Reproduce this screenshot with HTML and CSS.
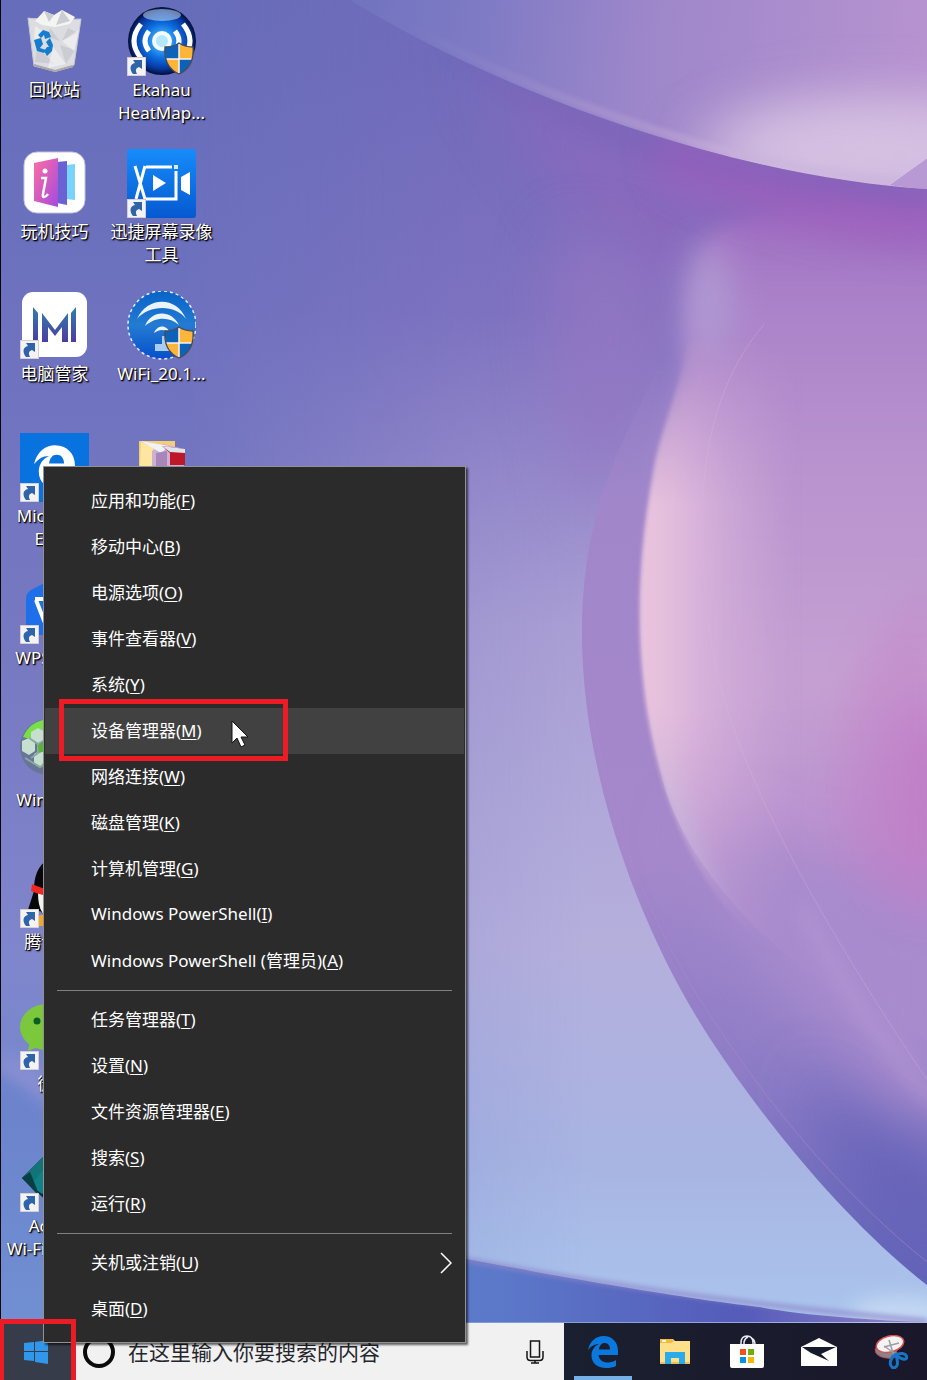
FILE: index.html
```html
<!DOCTYPE html>
<html lang="zh-CN">
<head>
<meta charset="utf-8">
<meta name="viewport" content="width=device-width, initial-scale=1">
<title>Windows 桌面</title>
<link rel="stylesheet" href="styles.css">
</head>
<body>
<svg class="defs" width="0" height="0" aria-hidden="true">
  <defs>
    <symbol id="shortcut" viewBox="0 0 19 19">
      <path d="M0 0H19V19H0Z" fill="#f4f2f2" stroke="#c9c4cc" stroke-width="1.5"/>
      <path d="M6 17C2 12 3 7 8 6L6 3H15V12L12 10C9 11 8 13 10 17Z" fill="#2f64a8"/>
    </symbol>
    <symbol id="shield" viewBox="0 0 30 33">
      <path d="M15 1C11 4 6 5 1 5C0 17 4 27 15 32C26 27 30 17 29 5C24 5 19 4 15 1Z" fill="#ffb53a"/>
      <path d="M15 1C11 4 6 5 1 5Q0.500 11 2 17H15ZM15 17H28C26 24 21 29 15 32Z" fill="#0b62b8"/>
      <path d="M15 2V31M2 17H28" stroke="#f4f4f4" stroke-width="1.500"/>
      <path d="M15 1C11 4 6 5 1 5C0 17 4 27 15 32C26 27 30 17 29 5C24 5 19 4 15 1Z" fill="none" stroke="#4a4a52" stroke-width="1.300"/>
    </symbol>
    <symbol id="edge" viewBox="0 0 30 32">
      <path d="M0 14C2 5 8 0 15.500 0C24 0 30 6 30 15V19H10.500C11 24 15 26.500 20 26.500C23.500 26.500 26 25.500 28 24V30C25 31.500 22 32 18 32C9 32 3.500 27 3.500 19.500C3.500 14 6.500 10 11 8C6 8 3 10.500 0 14ZM11 13.500H22C22 9.500 20 7 16.500 7C13.500 7 11.500 9.500 11 13.500Z"/>
    </symbol>
  </defs>
</svg>

<div class="screen">
  <main class="desktop">
    <svg class="wallpaper" viewBox="0 0 927 1323" preserveAspectRatio="none" aria-hidden="true">
      <defs>
        <linearGradient id="base" x1="0" y1="0" x2="0" y2="1">
          <stop offset="0" stop-color="#666dba"/><stop offset=".25" stop-color="#6e72bf"/><stop offset=".5" stop-color="#7779c1"/><stop offset=".72" stop-color="#8086cc"/><stop offset=".85" stop-color="#7388cd"/><stop offset="1" stop-color="#7b9ad8"/>
        </linearGradient>
        <linearGradient id="mid" gradientUnits="userSpaceOnUse" x1="0" y1="60" x2="0" y2="1323">
          <stop offset="0" stop-color="#746bbb"/><stop offset=".2" stop-color="#8072c0"/><stop offset=".32" stop-color="#9588ca"/><stop offset=".45" stop-color="#aa9fd4"/><stop offset=".7" stop-color="#b5afdc"/><stop offset=".87" stop-color="#a8b4e2"/><stop offset="1" stop-color="#aac5ed"/>
        </linearGradient>
        <linearGradient id="midFade" gradientUnits="userSpaceOnUse" x1="180" y1="0" x2="590" y2="0">
          <stop offset="0" stop-color="#fff" stop-opacity="0"/><stop offset=".72" stop-color="#fff" stop-opacity=".85"/><stop offset="1" stop-color="#fff"/>
        </linearGradient>
        <mask id="midMask"><rect width="927" height="1323" fill="url(#midFade)"/></mask>
        <linearGradient id="sky" gradientUnits="userSpaceOnUse" x1="300" y1="0" x2="927" y2="60">
          <stop offset="0" stop-color="#6b70bd"/><stop offset=".3" stop-color="#807bc5"/><stop offset=".55" stop-color="#9d87ca"/><stop offset="1" stop-color="#b793d0"/>
        </linearGradient>
        <linearGradient id="petal" gradientUnits="userSpaceOnUse" x1="0" y1="180" x2="0" y2="1290">
          <stop offset="0" stop-color="#9a66be"/><stop offset=".11" stop-color="#aa82c9"/><stop offset=".25" stop-color="#b792ce"/><stop offset=".45" stop-color="#c5a0d2"/><stop offset=".62" stop-color="#b78fce"/><stop offset=".75" stop-color="#a387cb"/><stop offset=".88" stop-color="#8775c3"/><stop offset="1" stop-color="#6265ba"/>
        </linearGradient>
        <linearGradient id="band" gradientUnits="userSpaceOnUse" x1="0" y1="350" x2="0" y2="1280">
          <stop offset="0" stop-color="#9b80c7" stop-opacity="0"/><stop offset=".18" stop-color="#a286ca"/><stop offset=".55" stop-color="#a488cb"/><stop offset=".8" stop-color="#8b7bc6"/><stop offset="1" stop-color="#6065b9"/>
        </linearGradient>
        <linearGradient id="pink" gradientUnits="userSpaceOnUse" x1="640" y1="0" x2="800" y2="0">
          <stop offset="0" stop-color="#eac4de"/><stop offset=".18" stop-color="#e3bedc"/><stop offset=".35" stop-color="#d8b3da"/><stop offset="1" stop-color="#cba8d7" stop-opacity="0"/>
        </linearGradient>
        <linearGradient id="pinkFade" gradientUnits="userSpaceOnUse" x1="0" y1="330" x2="0" y2="960">
          <stop offset="0" stop-color="#fff" stop-opacity="0"/><stop offset=".28" stop-color="#fff"/><stop offset=".6" stop-color="#fff"/><stop offset="1" stop-color="#fff" stop-opacity="0"/>
        </linearGradient>
        <mask id="pinkMask"><rect width="927" height="1323" fill="url(#pinkFade)"/></mask>
        <linearGradient id="rim" gradientUnits="userSpaceOnUse" x1="400" y1="0" x2="700" y2="0">
          <stop offset="0" stop-color="#c1a8d8" stop-opacity="0"/><stop offset="1" stop-color="#c9b2dc"/>
        </linearGradient>
        <linearGradient id="foot" gradientUnits="userSpaceOnUse" x1="0" y1="0" x2="927" y2="0">
          <stop offset="0" stop-color="#7394d8"/><stop offset=".55" stop-color="#5b77c8"/><stop offset=".8" stop-color="#555bb9"/><stop offset="1" stop-color="#9382c8"/>
        </linearGradient>
        <filter id="b2" filterUnits="userSpaceOnUse" x="-100" y="-100" width="1150" height="1550"><feGaussianBlur stdDeviation="2"/></filter>
        <filter id="b8" filterUnits="userSpaceOnUse" x="-100" y="-100" width="1150" height="1550"><feGaussianBlur stdDeviation="9"/></filter>
        <filter id="b18" filterUnits="userSpaceOnUse" x="-100" y="-100" width="1150" height="1550"><feGaussianBlur stdDeviation="18"/></filter>
        <filter id="b30" filterUnits="userSpaceOnUse" x="-100" y="-100" width="1150" height="1550"><feGaussianBlur stdDeviation="30"/></filter>
        <clipPath id="skyClip"><path d="M350 0C440 55 560 110 700 149C780 171 860 185 927 189V0Z"/></clipPath>
        <clipPath id="lowClip"><path d="M0 0H350C440 55 560 110 700 149C780 171 860 185 927 189V1323H0Z"/></clipPath>
        <clipPath id="petalClip"><path d="M690 150C700 330 580 440 582 640C584 780 640 930 709 1037C770 1130 850 1225 927 1285V150Z"/></clipPath>
      </defs>
      <rect width="927" height="1323" fill="url(#base)"/>
      <g clip-path="url(#lowClip)">
        <rect width="927" height="1323" fill="url(#mid)" mask="url(#midMask)"/>
        <path d="M470 60C560 110 740 170 950 185V270C840 260 720 230 680 330C640 300 560 200 470 60Z" fill="#9267bd" opacity=".6" filter="url(#b30)"/>
        <path d="M560 230C640 240 680 300 672 350C665 400 620 450 590 520C560 440 540 330 560 230Z" fill="#9477c3" opacity=".75" filter="url(#b30)"/>
      </g>
      <path d="M350 0C440 55 560 110 700 149C780 171 860 185 927 189V0Z" fill="url(#sky)"/>
      <g clip-path="url(#skyClip)">
        <ellipse cx="870" cy="150" rx="150" ry="45" fill="#d8c4e3" filter="url(#b30)"/>
        <ellipse cx="860" cy="155" rx="170" ry="38" fill="#d5c2e2" opacity=".7" filter="url(#b30)"/>
        <path d="M400 20C480 66 570 105 700 144C780 166 860 180 927 184" fill="none" stroke="url(#rim)" stroke-width="9" opacity=".4" filter="url(#b2)"/>
        <path d="M889 185L927 158V190Z" fill="#b899d3"/>
        <path d="M889 185L927 158" stroke="#d6c1e3" fill="none"/>
      </g>
      <g clip-path="url(#lowClip)">
        <path d="M715 230C780 200 860 205 960 210V1190C850 1120 730 960 690 800C650 650 640 520 675 400C695 350 670 290 715 230Z" fill="url(#petal)" filter="url(#b8)"/>
        <path d="M660 120C760 165 850 182 970 188V245C850 255 770 215 660 180Z" fill="#9d60bd" opacity=".8" filter="url(#b18)"/>
        <path d="M440 42C530 94 610 126 700 152L927 190V210L700 172C610 145 530 110 440 42Z" fill="#7a5db5" opacity=".35" filter="url(#b8)"/>
      </g>
      <path d="M667 350C630 430 580 500 582 640C584 780 640 930 709 1037C770 1130 850 1225 927 1285V1040C850 1010 710 920 666 792C640 700 630 590 653 473C660 430 680 390 686 350Z" fill="url(#band)"/>
      <g clip-path="url(#petalClip)">
        <path d="M690 820C760 1000 850 1080 960 1140V900Z" fill="#a78bcd" filter="url(#b30)"/>
        <path d="M800 1060C860 1120 900 1140 960 1160V1300C890 1260 830 1180 800 1060Z" fill="#6460b7" opacity=".8" filter="url(#b30)"/>
      </g>
      <g mask="url(#pinkMask)">
        <path d="M688 340C680 390 660 430 653 473C632 590 636 700 666 792C690 870 740 940 810 990V340Z" fill="url(#pink)" filter="url(#b2)"/>
      </g>
      <ellipse cx="708" cy="300" rx="22" ry="60" fill="#b1a1d5" opacity=".8" filter="url(#b18)"/>
      <ellipse cx="930" cy="790" rx="40" ry="100" fill="#c176c4" opacity=".8" filter="url(#b30)"/>
      <path d="M940 575C870 625 840 690 835 790C835 850 860 900 940 930Z" fill="#c47fc7" opacity=".35" filter="url(#b18)"/>
      <path d="M765 323C700 400 695 500 708 620C720 740 800 890 927 1080" fill="none" stroke="#dab9df" opacity=".3" stroke-width="1"/>
      <path d="M800 905C840 980 880 1050 940 1105" fill="none" stroke="#b79bd4" opacity=".6" stroke-width="12" filter="url(#b8)"/>
      <path d="M590 690C600 800 650 930 720 1030C780 1120 850 1200 927 1262" fill="none" stroke="#b08acb" opacity=".5" stroke-width="1"/>
      <ellipse cx="900" cy="1312" rx="50" ry="16" fill="#c9dcf4" opacity=".8" filter="url(#b8)"/>
      <path d="M0 1075C20 1082 50 1105 90 1150V1400H-60V1075Z" fill="#6380cc" opacity=".4" filter="url(#b2)"/>
      <path d="M0 1060C20 1070 50 1090 90 1130" fill="none" stroke="#a39bda" opacity=".5" stroke-width="16" filter="url(#b8)"/>
      <path d="M60 1160C200 1185 300 1225 440 1254C600 1285 720 1303 760 1307C800 1315 880 1321 927 1322L60 1323Z" fill="url(#foot)"/>
      <path d="M440 1255C600 1284 720 1302 927 1321" fill="none" stroke="#8e86c9" stroke-width="6" opacity=".6" filter="url(#b2)"/>
      <rect width="1" height="1323" fill="#08080c"/>
    </svg>

    <div class="icons">
      <button class="icon" type="button">
        <svg class="icon-art" viewBox="0 0 69 69" aria-hidden="true">
          <path d="M8 11L61 12L53 60L35 65L14 59Z" fill="#d6d8df"/>
          <path d="M8 11L23 13L38 13L61 12L54 58L36 64L14 59Z" fill="#dcdde1" stroke="#c2c6d4"/>
          <path d="M15 14L24 4L34 8L42 3L55 10L50 17L35 20L22 18Z" fill="#f4f4f2"/>
          <path d="M24 4L29 15L34 8ZM42 3L36 18L50 14ZM48 21L59 26L42 34ZM40 38L55 43L46 57ZM17 40L35 57L15 55ZM30 21L40 34L28 30Z" fill="#cbcdd3"/>
          <path d="M42 34L59 23L54 44ZM33 40L46 57L28 61ZM15 19L27 27L14 33Z" fill="#f7f7f7" opacity=".6"/>
          <g fill="#167dce"><path d="M18 28L23 23L29 25L31 30L25 32L24 28L21 31Z"/><path d="M14 33L21 31L23 37L20 41L26 43L24 46L17 44Z"/><path d="M30 31L33 38L32 44L27 49L24 44L27 40H29L26 35Z"/></g>
          <path d="M14 58L35 64L53 59" fill="none" stroke="#a9a6a5" stroke-width="2"/>
        </svg>
        <span>回收站</span>
      </button>
      <button class="icon" type="button">
        <svg class="icon-art" viewBox="0 0 69 69" aria-hidden="true">
          <rect x="4" y="3" width="61" height="61" rx="13" fill="#fff" stroke="#c4c0df"/>
          <defs><linearGradient id="pk" x1="0" y1="0" x2="1" y2="1"><stop offset="0" stop-color="#ff6da2"/><stop offset="1" stop-color="#a44be0"/></linearGradient></defs>
          <path d="M46 16L55 15V51L46 50Z" fill="#78d4fb"/><path d="M37 13L47 12V56L37 54Z" fill="#6a62d2"/>
          <path d="M14 14L38 9V58L14 52Z" fill="url(#pk)"/>
          <circle cx="25" cy="22" r="2.500" fill="#fff"/><path d="M21 29H26L23 45C22 49 25 49 28 45" fill="none" stroke="#fff" stroke-width="2.500"/>
        </svg>
        <span>玩机技巧</span>
      </button>
      <button class="icon" type="button">
        <svg class="icon-art" viewBox="0 0 69 69" aria-hidden="true">
          <defs><linearGradient id="mg" x1="0" y1="0" x2="0" y2="1"><stop offset="0" stop-color="#2f7fae"/><stop offset="1" stop-color="#4c3c9f"/></linearGradient></defs>
          <rect x="2" y="1" width="65" height="65" rx="11" fill="#fff"/>
          <path d="M13 16L18 22V50H13ZM22 51V22L35 39L48 22V51H42V36L35 45L28 36V51ZM51 22L56 16V51H51Z" fill="url(#mg)"/>
          <use href="#shortcut" x="0" y="49" width="19" height="19"/>
        </svg>
        <span>电脑管家</span>
      </button>
      <button class="icon" type="button">
        <svg class="icon-art" viewBox="0 0 69 69" aria-hidden="true">
          <path d="M0 0H69V69H0Z" fill="#0873df"/>
          <use href="#edge" x="14" y="12" width="41" height="44" fill="#fff"/>
          <use href="#shortcut" x="0" y="50" width="19" height="19"/>
        </svg>
        <span>Microsoft Edge</span>
      </button>
      <button class="icon" type="button">
        <svg class="icon-art" viewBox="0 0 69 69" aria-hidden="true">
          <path d="M6 24Q6 18 11 15L34 3L63 20V60H12Q6 60 6 54Z" fill="#1e70ea"/>
          <path d="M15 24H25L32 44L40 24H50" fill="none" stroke="#fff" stroke-width="4"/><path d="M16 25L25 48L33 27" fill="none" stroke="#fff" stroke-width="4"/>
          <use href="#shortcut" x="0" y="50" width="19" height="19"/>
        </svg>
        <span>WPS 2019</span>
      </button>
      <button class="icon" type="button">
        <svg class="icon-art" viewBox="0 0 69 69" aria-hidden="true">
          <circle cx="28" cy="30" r="28" fill="#687498"/>
          <path d="M3 20Q10 4 28 2V20L19 15L10 22Z" fill="#77df48"/>
          <path d="M11 15L18 11L25 15V23L18 27L11 23ZM2 24L9 21L15 26V34L9 38L2 34ZM14 37L21 33L28 37V46L21 50L14 46Z" fill="#c6dfcf"/>
          <path d="M9 21L18 27V36L11 41M25 23L18 27L28 36V58M5 41L20 50L28 46" fill="none" stroke="#88aa9f" stroke-width="2"/>
          <path d="M18 28L25 25V34L19 36ZM22 47L28 44V54Z" fill="#58b532"/>
        </svg>
        <span>WinSetup</span>
      </button>
      <button class="icon" type="button">
        <svg class="icon-art" viewBox="0 0 69 69" aria-hidden="true">
          <path d="M14 32C14 12 22 0 35 0S55 12 55 32L63 54L50 52L35 66L20 52L6 57Z" fill="#08080b"/>
          <path d="M18 34Q18 60 35 60T52 34Z" fill="#f2f2f2"/><path d="M12 25Q34 36 58 25V33Q33 42 11 32Z" fill="#f12820"/>
          <path d="M14 58L28 54L32 67H18Z" fill="#f4a52a"/>
          <use href="#shortcut" x="0" y="50" width="19" height="19"/>
        </svg>
        <span>腾讯QQ</span>
      </button>
      <button class="icon" type="button">
        <svg class="icon-art" viewBox="0 0 69 69" aria-hidden="true">
          <ellipse cx="27" cy="26" rx="27" ry="23" fill="#7bc83c"/><path d="M10 40L8 50L20 45Z" fill="#7bc83c"/>
          <circle cx="17" cy="20" r="3.500" fill="#075f24"/><circle cx="36" cy="20" r="3.500" fill="#075f24"/>
          <use href="#shortcut" x="0" y="50" width="19" height="19"/>
        </svg>
        <span>微信</span>
      </button>
      <button class="icon" type="button">
        <svg class="icon-art" viewBox="0 0 69 69" aria-hidden="true">
          <path d="M2 35L35 2L67 35L35 66Z" fill="#063034"/><path d="M2 35L35 2V22L10 42Z" fill="#107478"/><path d="M10 42L35 14V40L22 51Z" fill="#128089"/><path d="M2 35L10 29L17 46V51Z" fill="#083f44"/>
          <use href="#shortcut" x="0" y="50" width="19" height="19"/>
        </svg>
        <span>Acrylic<br>Wi-Fi Hom...</span>
      </button>

      <button class="icon" type="button">
        <svg class="icon-art" viewBox="0 0 69 69" aria-hidden="true">
          <defs><radialGradient id="ek" cx=".5" cy=".5" r=".5"><stop offset="0" stop-color="#68cdff"/><stop offset=".5" stop-color="#0c70e2"/><stop offset=".82" stop-color="#0737a0"/><stop offset="1" stop-color="#020e35"/></radialGradient></defs>
          <circle cx="35" cy="34" r="34" fill="url(#ek)"/><ellipse cx="35" cy="8" rx="19" ry="6" fill="#d5e9fa" opacity=".5"/>
          <circle cx="35" cy="34" r="8" fill="#b3e8ff" stroke="#f4fbff" stroke-width="4"/>
          <g fill="none" stroke="#fff" stroke-width="5"><path d="M22 24Q14 34 22 44M48 24Q56 34 48 44"/><path d="M14 17Q0 34 14 51M56 17Q70 34 56 51"/></g>
          <use href="#shield" x="37" y="35" width="30" height="33"/>
          <use href="#shortcut" x="0" y="50" width="19" height="19"/>
        </svg>
        <span>Ekahau HeatMap...</span>
      </button>
      <button class="icon" type="button">
        <svg class="icon-art" viewBox="0 0 69 69" aria-hidden="true">
          <defs><linearGradient id="rc" x1="0" y1="0" x2="0" y2="1"><stop offset="0" stop-color="#168cfa"/><stop offset="1" stop-color="#0659d0"/></linearGradient></defs>
          <rect width="69" height="69" rx="3" fill="url(#rc)"/>
          <path d="M19 18H45M49 22V50H19" fill="none" stroke="#fff" stroke-width="3"/><path d="M8 17L18 50M18 17L9 50" stroke="#fff" stroke-width="3"/>
          <path d="M26 26V42L39 34ZM54 28L63 23V46L54 41Z" fill="#fff"/><path d="M47 18H51" stroke="#d5ebff" stroke-width="4"/>
          <use href="#shortcut" x="0" y="50" width="19" height="19"/>
        </svg>
        <span>迅捷屏幕录像工具</span>
      </button>
      <button class="icon" type="button">
        <svg class="icon-art" viewBox="0 0 69 69" aria-hidden="true">
          <defs><linearGradient id="wf" x1="0" y1="0" x2="0" y2="1"><stop offset="0" stop-color="#0863c8"/><stop offset=".5" stop-color="#247bd2"/><stop offset="1" stop-color="#074fcb"/></linearGradient></defs>
          <circle cx="35" cy="34" r="34" fill="url(#wf)" stroke="#e0edf8" stroke-width="1.500" stroke-dasharray="3 3"/>
          <path d="M10 28C20 5 50 5 59 28C48 13 22 14 10 28ZM18 35C24 19 44 18 52 34C42 25 28 26 18 35ZM27 42C31 33 40 34 43 42C37 38 33 38 27 42Z" fill="#e9f3f8"/>
          <path d="M28 53H48V60H28ZM35 45H42V53H35Z" fill="#a7cdef"/>
          <use href="#shield" x="37" y="35" width="30" height="33"/>
        </svg>
        <span>WiFi_20.1...</span>
      </button>
      <button class="icon" type="button" aria-label="文件夹">
        <svg class="icon-art" viewBox="0 0 69 69" aria-hidden="true">
          <path d="M12 8H48V61H12Z" fill="#f3ce75"/><path d="M14 9L26 14V60L12 58Z" fill="#ffe6a0"/>
          <path d="M25 18L36 11L57 16V55H25Z" fill="#ccb0d6"/><path d="M14 8L42 13L34 20Z" fill="#eef3f8"/><path d="M35 13L58 16V32H43V20Z" fill="#bd1828"/><path d="M35 13L58 16V20L43 19Z" fill="#dde4ec"/><path d="M29 20L40 18V55H29Z" fill="#a986ba"/>
        </svg>
      </button>
    </div>
  </main>

  <footer class="taskbar">
    <button class="start" type="button" aria-label="开始">
      <svg width="24" height="24" viewBox="0 0 24 24" aria-hidden="true"><path d="M0 3L10 2V11H0ZM11 2L24 0V11H11ZM0 12H10V21L0 20ZM11 12H24V24L11 22Z" fill="#3097ea"/></svg>
    </button>
    <label class="search">
      <svg width="32" height="32" viewBox="0 0 32 32" aria-hidden="true"><circle cx="16" cy="16" r="14" fill="none" stroke="#0b0b0b" stroke-width="4"/></svg>
      <input type="text" placeholder="在这里输入你要搜索的内容" aria-label="搜索">
      <svg width="18" height="24" viewBox="0 0 18 24" fill="none" stroke="#151515" stroke-width="1.500" aria-hidden="true"><path d="M4.500 1H13.500V17H4.500ZM1 11V17Q1 20.500 4.500 20.500H13.500Q17 20.500 17 17V11M9 20.500V23M5 23H13"/></svg>
    </label>
    <nav class="apps">
      <button class="app running" type="button" aria-label="Microsoft Edge"><svg width="30" height="32" fill="#0a78dc" aria-hidden="true"><use href="#edge" width="30" height="32"/></svg></button>
      <button class="app" type="button" aria-label="文件资源管理器">
        <svg width="32" height="28" viewBox="0 0 32 28" aria-hidden="true"><path d="M1 1H14L16 3H31V26H1Z" fill="#ffe08a"/><path d="M1 1H13L15 3L12 5H1Z" fill="#f4b93a"/><path d="M3 2H7V4H3Z" fill="#fff7d8"/><path d="M1 24H31V26H1Z" fill="#e9c25c"/><path d="M6 26V14H26V26H20V20H12V26Z" fill="#2aabeb"/></svg>
      </button>
      <button class="app" type="button" aria-label="应用商店">
        <svg width="34" height="34" viewBox="0 0 34 34" aria-hidden="true"><path d="M11 10V8Q11 1 17 1T23 8V10M14 10V7Q15 3 18 2M21 3Q25 4 25 10" fill="none" stroke="#e9e9ef" stroke-width="1.500"/><path d="M0 9H34V31Q34 33 32 33H2Q0 33 0 31Z" fill="#fff"/><path d="M10 14H16V20H10Z" fill="#f1511b"/><path d="M18 14H24V20H18Z" fill="#72ad06"/><path d="M10 22H16V28H10Z" fill="#0395dc"/><path d="M18 22H24V28H18Z" fill="#fbb505"/></svg>
      </button>
      <button class="app" type="button" aria-label="邮件">
        <svg width="36" height="28" viewBox="0 0 36 28" aria-hidden="true"><path d="M0 9L18 0L36 9V28H0Z" fill="#fff"/><path d="M1 9H35L20 16L28 23L10 15Z" fill="#171a2b"/></svg>
      </button>
      <button class="app" type="button" aria-label="截图工具">
        <svg width="34" height="34" viewBox="0 0 34 34" aria-hidden="true"><ellipse cx="12" cy="17" rx="11" ry="6" fill="#87848c" stroke="#bd4e50" transform="rotate(12 12 17)"/><ellipse cx="16" cy="9" rx="14" ry="8" fill="#f6f3f4" stroke="#d8514c" stroke-width="1.500" transform="rotate(-14 16 9)"/><path d="M15 5L20 21M10 12L25 8M10 11L23 20" stroke="#9b9ea4" stroke-width="1.500"/><path d="M20 20Q31 16 33 22Q32 27 23 21M20 20Q13 29 19 33Q26 33 22 20" fill="none" stroke="#1675c4" stroke-width="3"/></svg>
      </button>
    </nav>
  </footer>

  <div class="menu" role="menu">
    <button class="item" type="button" role="menuitem"><span>应用和功能(<u>F</u>)</span></button>
    <button class="item" type="button" role="menuitem"><span>移动中心(<u>B</u>)</span></button>
    <button class="item" type="button" role="menuitem"><span>电源选项(<u>O</u>)</span></button>
    <button class="item" type="button" role="menuitem"><span>事件查看器(<u>V</u>)</span></button>
    <button class="item" type="button" role="menuitem"><span>系统(<u>Y</u>)</span></button>
    <button class="item active" type="button" role="menuitem"><span>设备管理器(<u>M</u>)</span>
      <svg class="cursor" width="18" height="28" viewBox="0 0 18 28" aria-hidden="true"><path d="M1 1V23L6 18L10 27L14 25L10 17H17Z" fill="#fff" stroke="#111" stroke-width="1"/></svg>
    </button>
    <button class="item" type="button" role="menuitem"><span>网络连接(<u>W</u>)</span></button>
    <button class="item" type="button" role="menuitem"><span>磁盘管理(<u>K</u>)</span></button>
    <button class="item" type="button" role="menuitem"><span>计算机管理(<u>G</u>)</span></button>
    <button class="item" type="button" role="menuitem"><span>Windows PowerShell(<u>I</u>)</span></button>
    <button class="item" type="button" role="menuitem"><span>Windows PowerShell (管理员)(<u>A</u>)</span></button>
    <hr class="rule">
    <button class="item" type="button" role="menuitem"><span>任务管理器(<u>T</u>)</span></button>
    <button class="item" type="button" role="menuitem"><span>设置(<u>N</u>)</span></button>
    <button class="item" type="button" role="menuitem"><span>文件资源管理器(<u>E</u>)</span></button>
    <button class="item" type="button" role="menuitem"><span>搜索(<u>S</u>)</span></button>
    <button class="item" type="button" role="menuitem"><span>运行(<u>R</u>)</span></button>
    <hr class="rule">
    <button class="item" type="button" role="menuitem"><span>关机或注销(<u>U</u>)</span>
      <svg class="chevron" width="12" height="22" viewBox="0 0 12 22" aria-hidden="true"><path d="M1 1L11 11L1 21" fill="none" stroke="#fff" stroke-width="1.500"/></svg>
    </button>
    <button class="item" type="button" role="menuitem"><span>桌面(<u>D</u>)</span></button>
  </div>
  <div class="start-mark"></div>
</div>
</body>
</html>
```
FILE: styles.css
```css
*,
*::after {
  box-sizing: border-box;
}

body {
  margin: 0;
  font-family: "Noto Sans", "Noto Sans CJK SC", sans-serif;
  font-size: 17px;
}

button {
  margin: 0;
  padding: 0;
  border: 0;
  background: none;
  color: inherit;
  font: inherit;
}

.defs {
  position: absolute;
}

.screen {
  position: relative;
  display: flex;
  flex-direction: column;
  min-height: 100vh;
  overflow: hidden;
}

.desktop {
  position: relative;
  flex: 1;
}

.wallpaper {
  position: absolute;
  inset: 0;
  width: 100%;
  height: 100%;
}

.icons {
  position: relative;
  display: grid;
  grid-template-rows: repeat(9, 142px);
  grid-auto-columns: 107px;
  grid-auto-flow: column;
  justify-content: start;
  padding: 7px 0 0 1px;
}

.icon {
  display: flex;
  flex-direction: column;
  align-items: center;
  gap: 2px;
  color: #fff;
  line-height: 23px;
  text-align: center;
  text-shadow: 1px 1px 2px #000, 1px 1px 1px #000;
}

.icon-art {
  width: 69px;
  height: 69px;
}

.taskbar {
  display: flex;
  height: 57px;
  background: linear-gradient(90deg, #1a2030 60%, #1a172b);
}

.start {
  display: grid;
  place-items: center;
  width: 72px;
  background: #373c4b;
}

.search {
  display: flex;
  flex: 1;
  align-items: center;
  gap: 13px;
  padding: 0 20px 0 11px;
  background: #f1f1f1;
}

.search input {
  flex: 1;
  min-width: 0;
  padding: 0;
  border: 0;
  background: none;
  font: inherit;
  font-size: 21px;
}

.search input::placeholder {
  color: #25262c;
  opacity: 1;
}

.apps {
  display: flex;
  padding-left: 3px;
}

.app {
  display: grid;
  place-items: center;
  width: 72px;
}

.running {
  background: linear-gradient(#76b0e6, #76b0e6) center bottom / 58px 4px no-repeat;
}

.menu {
  position: absolute;
  bottom: 37px;
  left: 43px;
  display: flex;
  flex-direction: column;
  width: 423px;
  padding: 11px 1px 10px;
  border: 1px solid #929292;
  background: #2b2b2b;
  box-shadow: 2px 2px 2px rgb(0 0 0 / 60%);
  color: #fff;
}

.item {
  position: relative;
  display: flex;
  align-items: center;
  height: 46px;
  padding: 0 12px 0 46px;
  text-align: left;
  white-space: nowrap;
}

.item span {
  padding-bottom: 3px;
}

.item u {
  text-underline-offset: 2px;
}

.active {
  background: #414141;
}

.active::after {
  content: "";
  position: absolute;
  top: -9px;
  left: 14px;
  width: 229px;
  height: 62px;
  border: 5px solid #ed1c24;
}

.cursor {
  position: absolute;
  top: 12px;
  left: 186px;
}

.chevron {
  margin-left: auto;
}

.rule {
  width: 395px;
  height: 1px;
  margin: 6px 12px;
  border: 0;
  background: #808080;
}

.start-mark {
  position: absolute;
  bottom: 0;
  left: 0;
  width: 76px;
  height: 61px;
  border: 5px solid #ed1c24;
  border-bottom: 0;
  border-left-width: 4px;
  pointer-events: none;
}
```
